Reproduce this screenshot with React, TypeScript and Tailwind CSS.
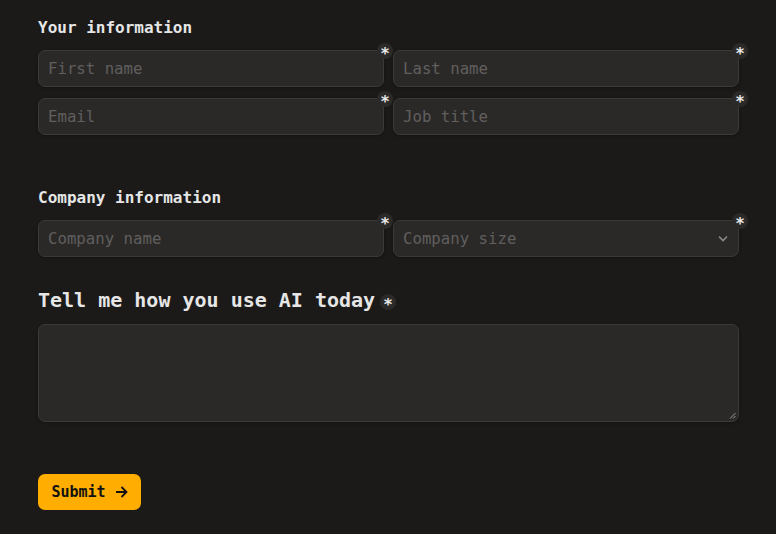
import React from "react";

const font = { fontFamily: '"DejaVu Sans Mono", "Liberation Mono", monospace' };

function Star({ className = "" }: { className?: string }) {
  return (
    <span
      className={
        "flex h-[16px] w-[16px] items-center justify-center rounded-full bg-[#2b2a29] text-[16px] font-bold leading-none text-[#e8e8e8] " +
        className
      }
    >
      <span className="mt-[5px]">*</span>
    </span>
  );
}

function Field({ placeholder, select }: { placeholder: string; select?: boolean }) {
  return (
    <div className="relative">
      <div className="flex h-[37px] items-center rounded-[7px] border border-[#3b3a39] bg-[#2a2928] px-[9px] shadow-[0_1px_3px_rgba(0,0,0,0.3)]">
        <span className="text-[15.7px] text-[#605f5e]">{placeholder}</span>
        {select && (
          <svg className="ml-auto mr-[1px]" width="10" height="7" viewBox="0 0 10 7" fill="none">
            <path d="M1 1.5 L5 5.5 L9 1.5" stroke="#8a8988" strokeWidth="1.6" />
          </svg>
        )}
      </div>
      <Star className="absolute -right-[9px] -top-[7px]" />
    </div>
  );
}

export default function App() {
  return (
    <div className="min-h-[534px] w-full bg-[#1b1a19] px-[38px] pt-[16px]" style={font}>
      <div className="w-[701px]">
        <h2 className="mb-[10px] text-[16px] font-bold leading-[24px] text-[#e6e6e6]">Your information</h2>
        <div className="grid grid-cols-2 gap-x-[9px] gap-y-[11px]">
          <Field placeholder="First name" />
          <Field placeholder="Last name" />
          <Field placeholder="Email" />
          <Field placeholder="Job title" />
        </div>
        <h2 className="mb-[10px] mt-[51px] text-[16px] font-bold leading-[24px] text-[#e6e6e6]">
          Company information
        </h2>
        <div className="grid grid-cols-2 gap-x-[9px]">
          <Field placeholder="Company name" />
          <Field placeholder="Company size" select />
        </div>
        <div className="mt-[29px] flex items-center">
          <h2 className="text-[20px] font-bold leading-[28px] text-[#e6e6e6]">Tell me how you use AI today</h2>
          <Star className="ml-[5px] mt-[4px]" />
        </div>
        <div className="relative mt-[10px] h-[98px] rounded-[7px] border border-[#3b3a39] bg-[#2a2928] shadow-[0_1px_3px_rgba(0,0,0,0.3)]">
          <svg className="absolute bottom-[2px] right-[2px]" width="7" height="7" viewBox="0 0 7 7">
            <path d="M6.5 1 L1 6.5 M6.5 4 L4 6.5" stroke="#9a9a9a" strokeWidth="1" />
          </svg>
        </div>
        <button className="mt-[52px] flex h-[36px] w-[103px] items-center justify-center gap-[9px] rounded-[7px] bg-[#ffad00] text-[15px] font-bold text-[#111]">
          Submit
          <svg width="13" height="12" viewBox="0 0 13 12" fill="none">
            <path d="M1 6 H11.5 M6.5 1 L11.5 6 L6.5 11" stroke="#111" strokeWidth="1.8" />
          </svg>
        </button>
      </div>
    </div>
  );
}
